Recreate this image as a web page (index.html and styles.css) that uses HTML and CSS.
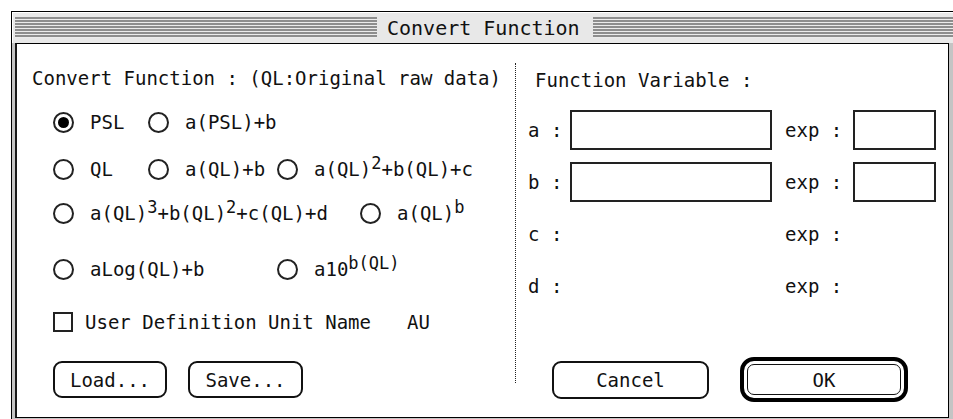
FILE: index.html
```html
<!DOCTYPE html>
<html>
<head>
<meta charset="utf-8">
<title>Convert Function</title>
<link rel="stylesheet" href="styles.css">
</head>
<body>
<div class="window">
  <div class="titlebar">
    <div class="stripes stripes-left"></div>
    <div class="title">Convert Function</div>
    <div class="stripes stripes-right"></div>
  </div>
  <div class="frame">
    <div class="content">
      <div class="panel-left">
        <div class="heading">Convert Function : (QL:Original raw data)</div>
        <div class="row r1">
          <div class="opt w95"><span class="radio on"></span><span class="lbl">PSL</span></div>
          <div class="opt"><span class="radio"></span><span class="lbl">a(PSL)+b</span></div>
        </div>
        <div class="row r2">
          <div class="opt w95"><span class="radio"></span><span class="lbl">QL</span></div>
          <div class="opt w129"><span class="radio"></span><span class="lbl">a(QL)+b</span></div>
          <div class="opt"><span class="radio"></span><span class="lbl">a(QL)<sup>2</sup>+b(QL)+c</span></div>
        </div>
        <div class="row r3">
          <div class="opt w307"><span class="radio"></span><span class="lbl">a(QL)<sup>3</sup>+b(QL)<sup>2</sup>+c(QL)+d</span></div>
          <div class="opt"><span class="radio"></span><span class="lbl">a(QL)<sup>b</sup></span></div>
        </div>
        <div class="row r4">
          <div class="opt w224"><span class="radio"></span><span class="lbl">aLog(QL)+b</span></div>
          <div class="opt"><span class="radio"></span><span class="lbl">a10<sup>b(QL)</sup></span></div>
        </div>
        <div class="row check-row">
          <span class="checkbox"></span><span class="check-lbl">User Definition Unit Name</span><span class="unit">AU</span>
        </div>
        <div class="btn-row-left">
          <div class="btn btn-load">Load...</div>
          <div class="btn btn-save">Save...</div>
        </div>
      </div>
      <div class="divider"></div>
      <div class="panel-right">
        <div class="heading-r">Function Variable :</div>
        <div class="var-row first">
          <span class="var-lbl">a :</span><span class="field"></span><span class="exp-lbl">exp :</span><span class="field-exp"></span>
        </div>
        <div class="var-row">
          <span class="var-lbl">b :</span><span class="field"></span><span class="exp-lbl">exp :</span><span class="field-exp"></span>
        </div>
        <div class="var-row">
          <span class="var-lbl">c :</span><span class="field-empty"></span><span class="exp-lbl">exp :</span>
        </div>
        <div class="var-row">
          <span class="var-lbl">d :</span><span class="field-empty"></span><span class="exp-lbl">exp :</span>
        </div>
        <div class="btn-row-right">
          <div class="btn btn-cancel">Cancel</div>
          <div class="ok-ring"><div class="btn btn-ok">OK</div></div>
        </div>
      </div>
    </div>
  </div>
</div>
</body>
</html>
```

FILE: styles.css
```css
html, body {
  margin: 0;
  padding: 0;
  background: #ffffff;
}
body {
  font-family: "DejaVu Sans Mono", "Liberation Mono", monospace;
  font-size: 19px;
  color: #111;
  width: 953px;
  height: 419px;
  overflow: hidden;
}
.window {
  margin: 11px 0 0 11px;
  width: 942px;
  height: 408px;
  box-sizing: border-box;
  border-top: 1px solid #000;
  border-left: 1px solid #000;
  background: #dcdcdc;
  display: flex;
  flex-direction: column;
}
.titlebar {
  height: 31px;
  flex: none;
  display: flex;
  align-items: center;
  padding-left: 3px;
  background: #e8e8e8;
  box-shadow: inset 1px 1px 0 #ffffff;
}
.stripes {
  height: 21px;
  background: repeating-linear-gradient(to bottom, #8e8e8e 0, #8e8e8e 2px, #ececec 2px, #ececec 3px);
}
.stripes-left {
  width: 362px;
}
.stripes-right {
  flex: 1;
  margin-left: 11px;
}
.title {
  width: 195px;
  margin-left: 10px;
  font-size: 20px;
  line-height: 22px;
  color: #111;
  white-space: nowrap;
}
.frame {
  flex: 1;
  display: flex;
  padding: 0 4px 1px 3px;
  background: #c4c4c4;
}
.content {
  flex: 1;
  display: flex;
  background: #fff;
  border: 1px solid #000;
  border-left: 2px solid #1a1a1a;
}
.panel-left {
  width: 498px;
  flex: none;
  display: flex;
  flex-direction: column;
}
.heading {
  margin: 23px 0 0 15px;
  line-height: 22px;
  white-space: nowrap;
}
.row {
  display: flex;
  align-items: center;
  height: 24px;
  margin-left: 36px;
  white-space: nowrap;
}
.r1 { margin-top: 21px; }
.r2 { margin-top: 23px; }
.r3 { margin-top: 20px; }
.r4 { margin-top: 32px; }
.check-row { margin-top: 29px; }
.opt {
  display: flex;
  align-items: center;
  gap: 16px;
}
.w95 { width: 95px; }
.w129 { width: 129px; }
.w224 { width: 224px; }
.w307 { width: 307px; }
.radio {
  width: 21px;
  height: 21px;
  box-sizing: border-box;
  border: 2px solid #222;
  border-radius: 50%;
  display: flex;
  align-items: center;
  justify-content: center;
  flex: none;
}
.radio.on::after {
  content: "";
  width: 11px;
  height: 11px;
  border-radius: 50%;
  background: #000;
}
.lbl {
  line-height: 24px;
}
sup {
  font-size: 17px;
  line-height: 0;
  vertical-align: 7px;
}
.checkbox {
  width: 20px;
  height: 20px;
  box-sizing: border-box;
  border: 2px solid #222;
  flex: none;
}
.check-lbl {
  margin-left: 12px;
}
.unit {
  margin-left: 36px;
}
.btn {
  box-sizing: border-box;
  border: 2px solid #111;
  border-radius: 9px;
  display: flex;
  align-items: center;
  justify-content: center;
  background: #fff;
}
.btn-row-left {
  display: flex;
  margin: 27px 0 0 36px;
  gap: 21px;
}
.btn-load { width: 114px; height: 37px; }
.btn-save { width: 115px; height: 37px; }
.divider {
  width: 0;
  height: 320px;
  margin-top: 19px;
  border-left: 1px dotted #222;
  flex: none;
}
.panel-right {
  flex: 1;
  display: flex;
  flex-direction: column;
  padding-left: 12px;
}
.heading-r {
  margin: 25px 0 0 7px;
  line-height: 22px;
  white-space: nowrap;
}
.var-row {
  display: flex;
  align-items: center;
  height: 52px;
  white-space: nowrap;
}
.var-row.first { margin-top: 13px; }
.var-lbl {
  width: 42px;
  flex: none;
}
.field, .field-empty {
  width: 202px;
  height: 40px;
  box-sizing: border-box;
  flex: none;
}
.field {
  border: 2px solid #222;
}
.exp-lbl {
  width: 68px;
  margin-left: 13px;
  flex: none;
}
.field-exp {
  width: 83px;
  height: 40px;
  box-sizing: border-box;
  border: 2px solid #222;
  flex: none;
}
.btn-row-right {
  display: flex;
  align-items: center;
  margin: 45px 0 0 24px;
}
.btn-cancel {
  width: 157px;
  height: 38px;
}
.ok-ring {
  margin-left: 31px;
  width: 168px;
  height: 45px;
  box-sizing: border-box;
  border: 4px solid #000;
  border-radius: 14px;
  padding: 3px;
  display: flex;
}
.btn-ok {
  flex: 1;
  border-width: 1px;
  border-radius: 7px;
}
```
